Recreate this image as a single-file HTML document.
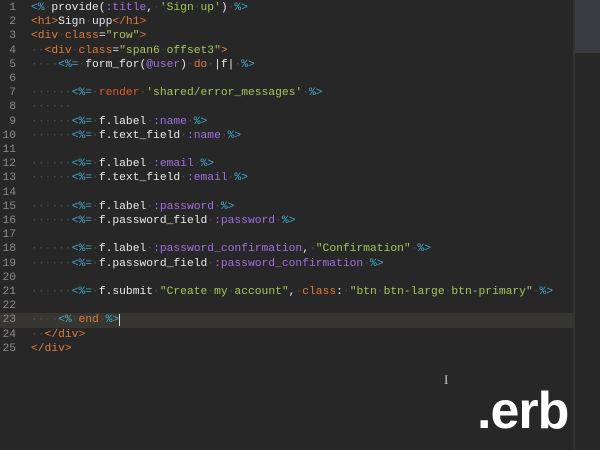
<!DOCTYPE html><html><head><style>
body{margin:0;width:600px;height:450px;background:#272727;overflow:hidden;position:relative;font-family:"Liberation Mono",monospace;font-size:11.3px}
#code{position:absolute;left:0;top:1px}
.l{position:absolute;left:0;width:573px;height:14.2px;line-height:14.2px;white-space:pre;color:#e8e8e8}
.n{display:inline-block;width:16px;text-align:right;color:#8c8c8c;margin-right:15px}
.cur{background:#383630}
.d{color:#4e4e4e}.t{color:#e07a3a}.c{color:#45a9c8}.p{color:#a070e0}.s{color:#a7c45a}.r{color:#e4562e}.o{color:#e07a3a}
#sep{position:absolute;left:573px;top:0;width:2px;height:450px;background:#333}
#mm{position:absolute;left:575px;top:0;width:25px;height:53px;background:#3a3a42}
#erb{position:absolute;left:477px;top:385px;line-height:1;font-family:"Liberation Sans",sans-serif;font-weight:bold;font-size:52px;color:#fff;letter-spacing:-1px}
#ib{position:absolute;left:444px;top:372px;color:#ccc;font-size:13px;font-family:"Liberation Serif",serif}
</style></head><body>
<div id="code">
<div class="l" style="top:0"><span class="n">1</span><span class="c">&lt;%</span><span class="d">·</span>provide(<span class="p">:title</span>,<span class="d">·</span><span class="s">'Sign</span><span class="d">·</span><span class="s">up'</span>)<span class="d">·</span><span class="c">%&gt;</span></div>
<div class="l" style="top:14.2px"><span class="n">2</span><span class="t">&lt;h1&gt;</span>Sign<span class="d">·</span>upp<span class="t">&lt;/h1&gt;</span></div>
<div class="l" style="top:28.4px"><span class="n">3</span><span class="t">&lt;div</span><span class="d">·</span><span class="o">class</span>=<span class="s">"row"</span><span class="t">&gt;</span></div>
<div class="l" style="top:42.6px"><span class="n">4</span><span class="d">··</span><span class="t">&lt;div</span><span class="d">·</span><span class="o">class</span>=<span class="s">"span6</span><span class="d">·</span><span class="s">offset3"</span><span class="t">&gt;</span></div>
<div class="l" style="top:56.8px"><span class="n">5</span><span class="d">····</span><span class="c">&lt;%=</span><span class="d">·</span>form_for(<span class="p">@user</span>)<span class="d">·</span><span class="o">do</span><span class="d">·</span>|f|<span class="d">·</span><span class="c">%&gt;</span></div>
<div class="l" style="top:71px"><span class="n">6</span></div>
<div class="l" style="top:85.2px"><span class="n">7</span><span class="d">······</span><span class="c">&lt;%=</span><span class="d">·</span><span class="r">render</span><span class="d">·</span><span class="s">'shared/error_messages'</span><span class="d">·</span><span class="c">%&gt;</span></div>
<div class="l" style="top:99.4px"><span class="n">8</span><span class="d">······</span></div>
<div class="l" style="top:113.6px"><span class="n">9</span><span class="d">······</span><span class="c">&lt;%=</span><span class="d">·</span>f.label<span class="d">·</span><span class="p">:name</span><span class="d">·</span><span class="c">%&gt;</span></div>
<div class="l" style="top:127.8px"><span class="n">10</span><span class="d">······</span><span class="c">&lt;%=</span><span class="d">·</span>f.text_field<span class="d">·</span><span class="p">:name</span><span class="d">·</span><span class="c">%&gt;</span></div>
<div class="l" style="top:142px"><span class="n">11</span></div>
<div class="l" style="top:156.2px"><span class="n">12</span><span class="d">······</span><span class="c">&lt;%=</span><span class="d">·</span>f.label<span class="d">·</span><span class="p">:email</span><span class="d">·</span><span class="c">%&gt;</span></div>
<div class="l" style="top:170.4px"><span class="n">13</span><span class="d">······</span><span class="c">&lt;%=</span><span class="d">·</span>f.text_field<span class="d">·</span><span class="p">:email</span><span class="d">·</span><span class="c">%&gt;</span></div>
<div class="l" style="top:184.6px"><span class="n">14</span></div>
<div class="l" style="top:198.8px"><span class="n">15</span><span class="d">······</span><span class="c">&lt;%=</span><span class="d">·</span>f.label<span class="d">·</span><span class="p">:password</span><span class="d">·</span><span class="c">%&gt;</span></div>
<div class="l" style="top:213px"><span class="n">16</span><span class="d">······</span><span class="c">&lt;%=</span><span class="d">·</span>f.password_field<span class="d">·</span><span class="p">:password</span><span class="d">·</span><span class="c">%&gt;</span></div>
<div class="l" style="top:227.2px"><span class="n">17</span></div>
<div class="l" style="top:241.4px"><span class="n">18</span><span class="d">······</span><span class="c">&lt;%=</span><span class="d">·</span>f.label<span class="d">·</span><span class="p">:password_confirmation</span>,<span class="d">·</span><span class="s">"Confirmation"</span><span class="d">·</span><span class="c">%&gt;</span></div>
<div class="l" style="top:255.6px"><span class="n">19</span><span class="d">······</span><span class="c">&lt;%=</span><span class="d">·</span>f.password_field<span class="d">·</span><span class="p">:password_confirmation</span><span class="d">·</span><span class="c">%&gt;</span></div>
<div class="l" style="top:269.8px"><span class="n">20</span></div>
<div class="l" style="top:284px"><span class="n">21</span><span class="d">······</span><span class="c">&lt;%=</span><span class="d">·</span>f.submit<span class="d">·</span><span class="s">"Create</span><span class="d">·</span><span class="s">my</span><span class="d">·</span><span class="s">account"</span>,<span class="d">·</span><span class="o">class</span>:<span class="d">·</span><span class="s">"btn</span><span class="d">·</span><span class="s">btn-large</span><span class="d">·</span><span class="s">btn-primary"</span><span class="d">·</span><span class="c">%&gt;</span></div>
<div class="l" style="top:298.2px"><span class="n">22</span></div>
<div class="l cur" style="top:312.4px"><span class="n">23</span><span class="d">····</span><span class="c">&lt;%</span><span class="d">·</span><span class="o">end</span><span class="d">·</span><span class="c">%&gt;</span><span style="border-left:1px solid #ddd"></span></div>
<div class="l" style="top:326.6px"><span class="n">24</span><span class="d">··</span><span class="t">&lt;/div&gt;</span></div>
<div class="l" style="top:340.8px"><span class="n">25</span><span class="t">&lt;/div&gt;</span></div>
</div>
<div id="sep"></div><div id="mm"></div>
<div id="ib">I</div>
<div id="erb">.erb</div>
</body></html>
